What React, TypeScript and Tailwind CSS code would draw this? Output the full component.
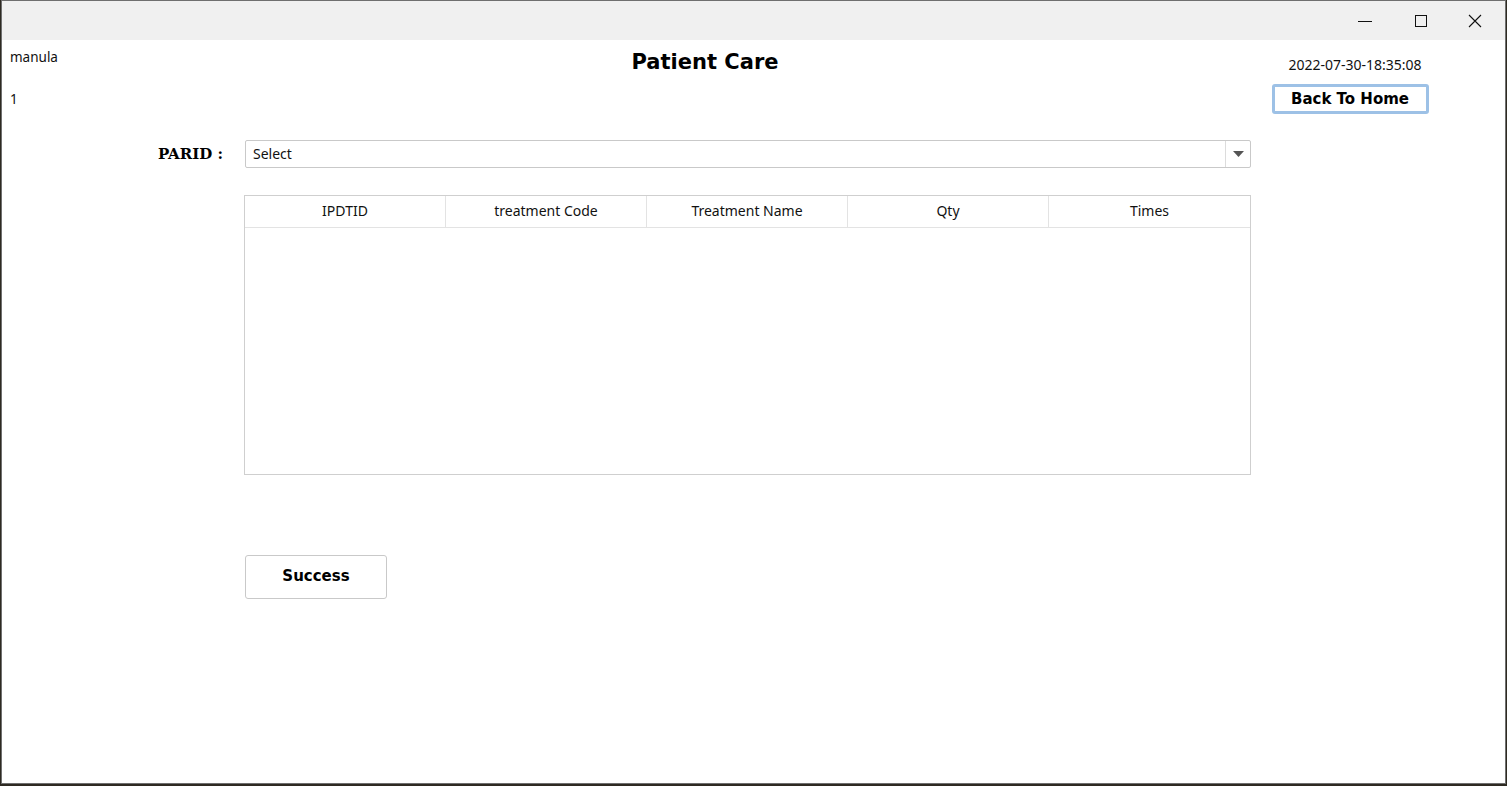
import React from 'react';

const columns = ['IPDTID', 'treatment Code', 'Treatment Name', 'Qty', 'Times'];

const App: React.FC = () => {
  return (
    <div className="w-[1507px] h-[786px] bg-[#2e2a22] overflow-hidden">
      <div className="ml-px w-[1505px] h-[784px] border border-[#6f6f6f] bg-white flex flex-col font-['Noto_Sans',sans-serif] text-[#111]">
        {/* title bar */}
        <div className="h-[39px] bg-[#f0f0f0] flex justify-end items-center shrink-0">
          <div className="w-[46px] h-[39px] flex items-center justify-center">
            <svg width="14" height="14" viewBox="0 0 14 14">
              <path d="M0 7.5h14" stroke="#111" strokeWidth="1" />
            </svg>
          </div>
          <div className="w-[46px] h-[39px] ml-[10px] flex items-center justify-center">
            <svg width="14" height="14" viewBox="0 0 14 14">
              <rect x="1.5" y="1.5" width="11" height="11" fill="none" stroke="#111" strokeWidth="1" />
            </svg>
          </div>
          <div className="w-[46px] h-[39px] ml-[8px] mr-[7px] flex items-center justify-center">
            <svg width="14" height="14" viewBox="0 0 14 14">
              <path d="M1 1l12 12M13 1L1 13" stroke="#111" strokeWidth="1.1" />
            </svg>
          </div>
        </div>

        {/* header */}
        <div className="flex pl-[8px] pr-[76px] h-[76px]">
          <div className="w-[129px] text-[13.5px] leading-none">
            <div className="mt-[11px]">manula</div>
            <div className="mt-[28px]">1</div>
          </div>
          <div className="flex-1 text-center">
            <h1 className="mt-[7px] font-['DejaVu_Sans',sans-serif] font-bold text-[21px] text-black">Patient Care</h1>
          </div>
          <div className="w-[158px] flex flex-col items-center">
            <div className="mt-[18px] text-[14px] leading-none ml-[10px]">2022-07-30-18:35:08</div>
            <button className="mt-[12px] w-[157px] h-[30px] border-[3px] border-[#9dc1e6] rounded-[3px] bg-white font-['DejaVu_Sans',sans-serif] font-bold text-[15px] text-black leading-none">
              Back To Home
            </button>
          </div>
        </div>

        {/* PARID row */}
        <div className="flex items-center mt-[24px]">
          <div className="w-[243px] pr-[22px] text-right font-['DejaVu_Serif',serif] font-bold text-[15px] text-black">PARID :</div>
          <div className="w-[1006px] h-[28px] border border-[#c9c9c9] rounded-[2px] flex">
            <div className="flex-1 pl-[7px] text-[14px] leading-[26px]">Select</div>
            <div className="w-[25px] border-l border-[#dcdcdc] flex items-center justify-center">
              <svg width="11" height="7" viewBox="0 0 11 7">
                <path d="M0 0h11L5.5 6z" fill="#555" />
              </svg>
            </div>
          </div>
        </div>

        {/* table */}
        <div className="ml-[242px] mt-[27px] w-[1007px] h-[280px] border border-[#cfcfcf]">
          <div className="grid grid-cols-5 h-[32px] border-b border-[#e3e3e3]">
            {columns.map((c, i) => (
              <div
                key={c}
                className={`flex items-center justify-center pb-[3px] text-[14px] ${i < columns.length - 1 ? 'border-r border-[#e3e3e3]' : ''}`}
              >
                {c}
              </div>
            ))}
          </div>
        </div>

        {/* action */}
        <div className="ml-[243px] mt-[80px]">
          <button className="w-[142px] h-[44px] pb-[2px] border border-[#c9c9c9] rounded-[3px] bg-white font-['DejaVu_Sans',sans-serif] font-bold text-[15px] text-black">
            Success
          </button>
        </div>
      </div>
    </div>
  );
};

export default App;
